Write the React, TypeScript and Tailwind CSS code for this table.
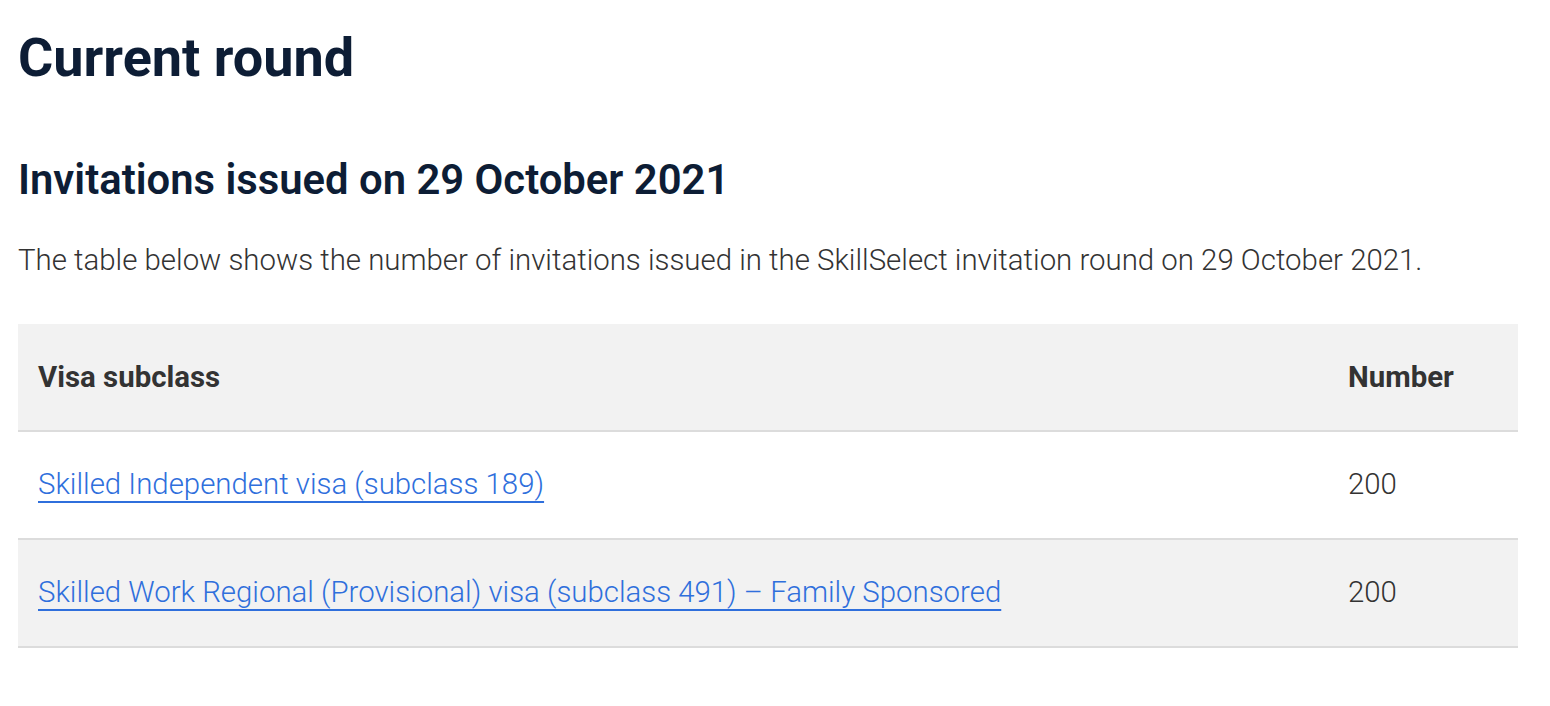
const rows = [
  { name: "Skilled Independent visa (subclass 189)", count: "200" },
  {
    name: "Skilled Work Regional (Provisional) visa (subclass 491) – Family Sponsored",
    count: "200",
  },
];

export default function App() {
  return (
    <div className="min-h-screen bg-white px-[18px] pt-[26px] font-['Roboto',sans-serif] text-[#333]">
      <h1 className="text-[54px] font-bold leading-[64px] text-[#0d1d35]">Current round</h1>

      <h2 className="mt-[66px] text-[41.8px] font-semibold leading-[48px] text-[#0d1d35]">
        Invitations issued on 29 October 2021
      </h2>

      <p className="mt-[34px] text-[29.4px] font-light leading-[44px] text-[#333]">
        The table below shows the number of invitations issued in the SkillSelect invitation round on 29 October 2021.
      </p>

      <table className="mt-[42px] w-[1500px] border-collapse text-[29.4px]">
        <thead>
          <tr className="border-b-2 border-[#dcdcdc] bg-[#f2f2f2]">
            <th className="h-[107px] px-[20px] text-left font-bold">Visa subclass</th>
            <th className="h-[107px] w-[190px] px-[20px] text-left font-bold">Number</th>
          </tr>
        </thead>
        <tbody>
          {rows.map((row, i) => (
            <tr
              key={row.name}
              className={`border-b-2 border-[#dcdcdc] ${i % 2 === 1 ? "bg-[#f2f2f2]" : "bg-white"}`}
            >
              <td className="h-[108px] px-[20px] pb-[1px] font-light">
                <a
                  href="#"
                  className="text-[#2f6fdc] underline decoration-2 underline-offset-[7px]"
                >
                  {row.name}
                </a>
              </td>
              <td className="h-[108px] px-[20px] pb-[1px] font-light">{row.count}</td>
            </tr>
          ))}
        </tbody>
      </table>
    </div>
  );
}
